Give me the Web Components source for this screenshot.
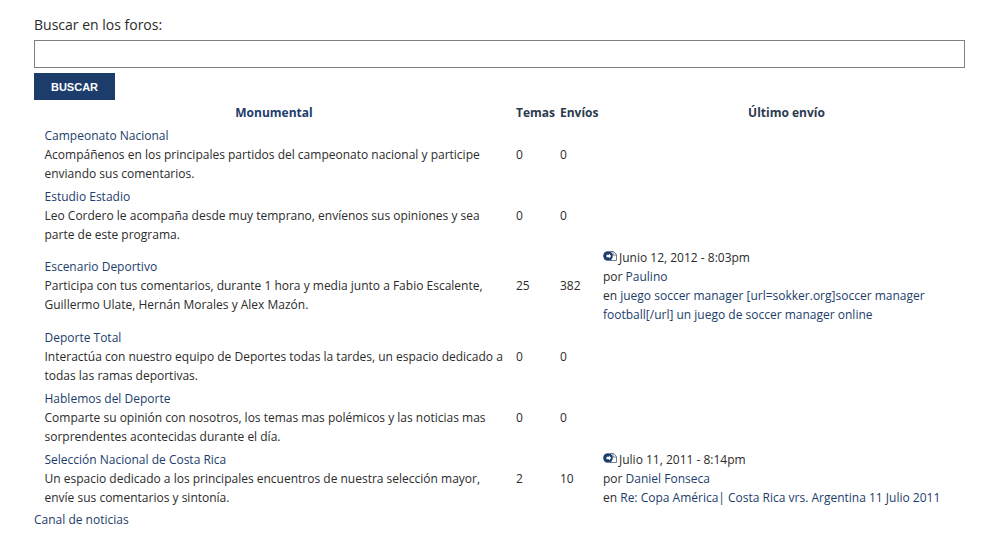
<!DOCTYPE html>
<html lang="es"><head><meta charset="utf-8"><style>
html,body{margin:0;background:#fff}
body{font-family:"Open Sans",sans-serif;font-size:12px;line-height:19px;color:#2b2b2b}
</style></head><body>
<template id="fp"><style>
:host{display:block;width:931px;padding:15px 0 0 34px}
.foot{color:#1c3d6b;height:19px;margin-top:1px}
</style><forum-search></forum-search><slot></slot><div class="foot">Canal de noticias</div></template>
<template id="fs"><style>
:host{display:block}
label{display:block;font-size:14px;line-height:19px;margin-bottom:6px}
.i{box-sizing:border-box;display:block;width:931px;height:28px;border:1px solid #7f7f7f;background:#fff;margin-bottom:5px}
.b{width:81px;height:27px;background:#1c3d6b;color:#fff;font:bold 11px/28px "Liberation Sans",sans-serif;text-align:center}
</style><label>Buscar en los foros:</label><div class="i"></div><div class="b">BUSCAR</div></template>
<template id="fh"><style>
:host{display:grid;grid-template-columns:482px 44px 43px 1fr;height:24px;align-items:center;font-weight:700;color:#1c3d6b}
div{white-space:nowrap}
.c{text-align:center}
.m{padding-right:2px}
.e{color:#2b3a4e}
.u{padding-left:5px}
</style><div class="c m">Monumental</div><div class="e">Temas</div><div class="e">Envíos</div><div class="c e u"><slot></slot></div></template>
<template id="fr"><style>
:host{display:grid;grid-template-columns:482px 44px 43px 1fr;align-items:center;padding:2px 0}
.m{padding-left:10.5px;width:462px}
.l{white-space:nowrap}
:host([tall]) .m,:host([tall]) .n{margin-top:-1px}
::slotted([slot=title]){color:#1c3d6b;display:block}
::slotted([slot=last]){display:block}
</style><div class="m"><slot name="title"></slot><slot></slot></div><div class="n"><slot name="t"></slot></div><div class="n"><slot name="e"></slot></div><div class="l"><slot name="last"></slot></div></template>
<template id="ic"><style>
:host{display:inline-block;width:14px;height:11px;margin-right:2px}svg{display:block}
</style><svg width="14" height="11" viewBox="0 0 14 11"><path d="M7 .5h3.500L13.500 3.500V9.500H7z" fill="#fff" stroke="#6d7f98"/><path d="M10 .5V4H13.500" fill="none" stroke="#6d7f98"/><circle cx="5" cy="5" r="4.800" fill="#1c3d6b"/><path d="M3.500 3.800H6V2.600L8.200 5 6 7.400V6.200H3.500z" fill="#fff"/></svg></template>
<forum-page>
<forum-head>Último envío</forum-head>
<forum-row><span slot="title">Campeonato Nacional</span>Acompáñenos en los principales partidos del campeonato nacional y participe enviando sus comentarios.<span slot="t">0</span><span slot="e">0</span></forum-row>
<forum-row><span slot="title">Estudio Estadio</span>Leo Cordero le acompaña desde muy temprano, envíenos sus opiniones y sea parte de este programa.<span slot="t">0</span><span slot="e">0</span></forum-row>
<forum-row tall><span slot="title">Escenario Deportivo</span>Participa con tus comentarios, durante 1 hora y media junto a Fabio Escalente, Guillermo Ulate, Hernán Morales y Alex Mazón.<span slot="t">25</span><span slot="e">382</span><div slot="last"><post-icon></post-icon>Junio 12, 2012 - 8:03pm<br>por <span style="color:#1c3d6b">Paulino</span><br>en <span style="color:#1c3d6b">juego soccer manager [url=sokker.org]soccer manager<br>football[/url] un juego de soccer manager online</span></div></forum-row>
<forum-row><span slot="title">Deporte Total</span>Interactúa con nuestro equipo de Deportes todas la tardes, un espacio dedicado a todas las ramas deportivas.<span slot="t">0</span><span slot="e">0</span></forum-row>
<forum-row><span slot="title">Hablemos del Deporte</span>Comparte su opinión con nosotros, los temas mas polémicos y las noticias mas sorprendentes acontecidas durante el día.<span slot="t">0</span><span slot="e">0</span></forum-row>
<forum-row><span slot="title">Selección Nacional de Costa Rica</span>Un espacio dedicado a los principales encuentros de nuestra selección mayor, envíe sus comentarios y sintonía.<span slot="t">2</span><span slot="e">10</span><div slot="last"><post-icon></post-icon>Julio 11, 2011 - 8:14pm<br>por <span style="color:#1c3d6b">Daniel Fonseca</span><br>en <span style="color:#1c3d6b">Re: Copa América| Costa Rica vrs. Argentina 11 Julio 2011</span></div></forum-row>
</forum-page>
<script>
for(const [n,t] of [['forum-search','fs'],['forum-page','fp'],['forum-head','fh'],['forum-row','fr'],['post-icon','ic']]){
customElements.define(n,class extends HTMLElement{constructor(){super();this.attachShadow({mode:'open'}).appendChild(document.getElementById(t).content.cloneNode(true))}})}
</script></body></html>
